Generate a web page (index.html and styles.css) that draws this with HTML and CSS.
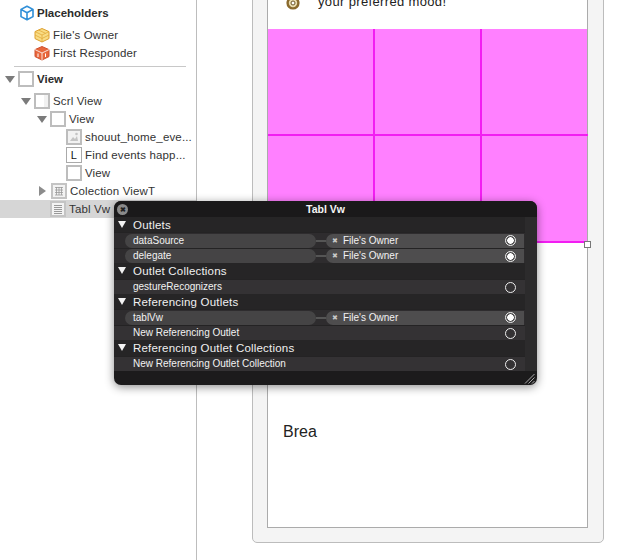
FILE: index.html
```html
<!DOCTYPE html>
<html lang="en">
<head>
<meta charset="utf-8">
<title>Tabl Vw connections</title>
<link rel="stylesheet" href="styles.css">
</head>
<body>
<div class="page">
  <aside class="outline">
    <div class="row row-head indent-0">
      <svg class="ico-cube" viewBox="0 0 16 16"><path d="M8 1.2 14 4.4V11.6L8 14.8 2 11.6V4.4Z M2 4.4 8 7.8 14 4.4 M8 7.8V14.8" fill="none" stroke="#2f8fd8" stroke-width="1.6" stroke-linejoin="round"/></svg>
      <b>Placeholders</b>
    </div>
    <div class="row row-ph first-ph">
      <svg class="ico-cube" viewBox="0 0 16 16"><path d="M8 1.5 15 4.6V11.6L8 15 1 11.6V4.6Z" fill="#f8dc85" stroke="#dd9f2c"/><path d="M1 4.6 8 8 15 4.6 M8 8V15 M4.5 3 11.5 6.3 M1 8 8 11.5 15 8" fill="none" stroke="#e2aa3a" stroke-width=".8"/></svg>
      <span>File's Owner</span>
    </div>
    <div class="row row-ph">
      <svg class="ico-cube" viewBox="0 0 16 16"><path d="M8 1.5 15 4.6V11.6L8 15 1 11.6V4.6Z" fill="#e8673c" stroke="#cf5230"/><path d="M1 4.6 8 8 15 4.6 M8 8V15" fill="none" stroke="#fff" stroke-width=".8"/><path d="M4 8.5V12 M11.5 8.5V12" stroke="#fff" fill="none"/></svg>
      <span>First Responder</span>
    </div>
    <hr class="divider">
    <div class="row row-view">
      <i class="tri down"></i><span class="box box-lg"></span><b>View</b>
    </div>
    <div class="row row-tall level-1">
      <i class="tri down"></i><span class="box box-scroll"></span><span>Scrl View</span>
    </div>
    <div class="row level-2">
      <i class="tri down"></i><span class="box"></span><span>View</span>
    </div>
    <div class="row level-3">
      <span class="box box-img">
        <svg viewBox="0 0 12 12"><path d="M2 10 5 6 7 8 9 5 10 10Z" fill="#c4c4c4"/><circle cx="8.5" cy="3" r="1.3" fill="#c4c4c4"/></svg>
      </span><span>shouut_home_eve...</span>
    </div>
    <div class="row level-3">
      <span class="box box-label">L</span><span>Find events happ...</span>
    </div>
    <div class="row level-3">
      <span class="box"></span><span>View</span>
    </div>
    <div class="row level-2">
      <i class="tri right"></i><span class="box box-grid">
        <svg viewBox="0 0 12 12"><path d="M2 2.5H10 M2 5H10 M2 7.5H10 M2 10H10 M3.5 2V10 M6 2V10 M8.5 2V10" stroke="#999" stroke-width=".8" fill="none"/></svg>
      </span><span>Colection ViewT</span>
    </div>
    <div class="row level-2 selected">
      <i class="tri none"></i><span class="box box-table">
        <svg viewBox="0 0 12 12"><path d="M2 2.5H10 M2 4.5H10 M2 6.5H10 M2 8.5H10 M2 10.5H10" stroke="#999" fill="none"/></svg>
      </span><span>Tabl Vw</span>
    </div>
  </aside>

  <main class="canvas">
    <div class="frame">
      <div class="screen">
        <div class="intro">
          <svg class="mood" viewBox="0 0 14 14"><circle cx="7" cy="7" r="5.4" fill="#e9dcae" stroke="#8a6a2d" stroke-width="2.4"/><circle cx="7" cy="7" r="2" fill="#fff" stroke="#6d5525"/></svg>
          <span>your preferred mood!</span>
        </div>
        <div class="pink">
          <div class="cell"></div><div class="cell"></div><div class="cell"></div>
          <div class="cell"></div><div class="cell"></div><div class="cell"></div>
          <span class="handle"></span>
        </div>
        <div class="label-brea">Brea</div>
      </div>
    </div>
  </main>

  <section class="panel">
    <header class="panel-title">
      <span class="close">✖</span>
      <span>Tabl Vw</span>
    </header>
    <div class="panel-body">
      <div class="p-head"><i class="p-tri"></i>Outlets</div>
      <div class="p-row linked"><span class="pill pill-l">dataSource</span><span class="wire"></span><span class="pill pill-r"><em>✖</em>File's Owner</span><span class="dot on"></span></div>
      <div class="p-row linked"><span class="pill pill-l">delegate</span><span class="wire"></span><span class="pill pill-r"><em>✖</em>File's Owner</span><span class="dot on"></span></div>
      <div class="p-head"><i class="p-tri"></i>Outlet Collections</div>
      <div class="p-row"><span class="plain">gestureRecognizers</span><span class="dot"></span></div>
      <div class="p-head"><i class="p-tri"></i>Referencing Outlets</div>
      <div class="p-row linked"><span class="pill pill-l">tablVw</span><span class="wire"></span><span class="pill pill-r"><em>✖</em>File's Owner</span><span class="dot on"></span></div>
      <div class="p-row"><span class="plain">New Referencing Outlet</span><span class="dot"></span></div>
      <div class="p-head"><i class="p-tri"></i>Referencing Outlet Collections</div>
      <div class="p-row"><span class="plain">New Referencing Outlet Collection</span><span class="dot"></span></div>
    </div>
    <footer class="panel-foot">
      <svg class="grip" viewBox="0 0 11 11"><path d="M10.5 1 1 10.5 M10.5 4.5 4.5 10.5 M10.5 8 8 10.5" stroke="#aaa" fill="none"/></svg>
    </footer>
  </section>
</div>
</body>
</html>
```

FILE: styles.css
```css
* { box-sizing: border-box; }
html, body { margin: 0; padding: 0; background: #fff; }
body { font-family: "Liberation Sans", Arial, sans-serif; color: #333; }

.page {
  position: relative;
  display: flex;
  width: 635px;
  height: 560px;
  overflow: hidden;
}

/* outline */
.outline {
  flex: 0 0 197px;
  height: 560px;
  padding-top: 4px;
  border-right: 1px solid #bdbdbd;
  font-size: 11.5px;
  letter-spacing: .15px;
}
.row {
  display: flex;
  align-items: center;
  height: 18px;
  white-space: nowrap;
}
.row b { font-size: 11.5px; letter-spacing: 0; color: #2c2c2c; }
.row-head { padding-left: 19px; gap: 2px; }
.row-ph { padding-left: 34px; gap: 3px; }
.first-ph { margin-top: 4px; }
.ico-cube { width: 16px; height: 16px; flex: none; }
.divider {
  height: 1px;
  margin: 4px 10px 3px 14px;
  border: 0;
  background: #c8c8c8;
}
.row-view { padding-left: 5px; }
.row-view .box { margin-right: 3px; }
.row-tall { margin-top: 4px; }
.level-1 { padding-left: 21px; }
.level-2 { padding-left: 37px; }
.level-3 { padding-left: 66px; }
.tri { flex: none; display: block; width: 0; height: 0; margin-right: 3px; }
.tri.down { width: 10px; border-left: 5px solid transparent; border-right: 5px solid transparent; border-top: 7px solid #7b7b7b; margin-right: 3px; }
.tri.right { margin-left: 2px; margin-right: 5px; border-top: 5px solid transparent; border-bottom: 5px solid transparent; border-left: 7px solid #8c8c8c; }
.tri.none { width: 10px; }
.box {
  display: flex;
  flex: none;
  align-items: center;
  justify-content: center;
  width: 16px;
  height: 16px;
  margin-right: 3px;
  border: 2px solid #bdbdbd;
  background: #fff;
}
.box svg { width: 12px; height: 12px; }
.box-lg { width: 16px; height: 16px; }
.box-scroll { box-shadow: inset -4px 0 0 #f1f1f1; }
.box-img { background: #f2f2f2; }
.box-label {
  border: 1px solid #aaa;
  color: #111;
  font-size: 11px;
}
.box-grid, .box-table { border-color: #c4c4c4; background: #f3f3f3; }
.selected { background: #d6d6d6; }

/* canvas */
.canvas { flex: 1; min-width: 0; height: 560px; padding-left: 55px; }
.frame {
  width: 352px;
  height: 563px;
  margin-top: -20px;
  padding: 0 15px 15px 14px;
  border: 1px solid #bcbcbc;
  border-radius: 5px;
  background: #f4f4f4;
}
.screen {
  height: 547px;
  border: 1px solid #ababab;
  border-top: 0;
  background: #fff;
}
.intro {
  display: flex;
  align-items: flex-end;
  height: 48px;
  padding: 0 0 19px 18px;
  color: #222;
  font-size: 13px;
  letter-spacing: .35px;
}
.mood { width: 14px; height: 14px; margin-right: 18px; }
.intro span { line-height: 16px; }
.pink {
  position: relative;
  display: grid;
  grid-template-columns: 107px 107px 106px;
  grid-template-rows: 107px 107px;
  height: 214px;
  background: #ff80ff;
}
.cell { border-right: 2px solid #f21df2; border-bottom: 2px solid #f21df2; }
.cell:nth-child(3n) { border-right: 0; }
.handle {
  position: absolute;
  right: -4px;
  bottom: -5px;
  width: 7px;
  height: 7px;
  border: 1px solid #777;
  background: #fff;
}
.label-brea {
  margin: 179px 0 0 15px;
  color: #222;
  font-size: 16px;
  line-height: 20px;
}

/* connections panel */
.panel {
  position: absolute;
  left: 114px;
  top: 201px;
  width: 423px;
  height: 184px;
  overflow: hidden;
  border-radius: 7px;
  background: #1c1b1c;
  box-shadow: 0 2px 10px rgba(0,0,0,.45);
  color: #f2f2f2;
  font-size: 10px;
}
.panel-title {
  position: relative;
  display: flex;
  align-items: center;
  justify-content: center;
  height: 16px;
  background: #1a191a;
  color: #f5f5f5;
  font-size: 10.5px;
  font-weight: bold;
}
.close {
  position: absolute;
  left: 3px;
  top: 3px;
  width: 11px;
  height: 11px;
  border-radius: 50%;
  background: #8a8a8a;
  color: #222;
  font-size: 7px;
  line-height: 11px;
  text-align: center;
}
.panel-body { height: 154px; padding-right: 12px; background: #2c2b2c; }
.p-head {
  display: flex;
  align-items: center;
  height: 15.4px;
  padding-left: 4px;
  background: #262526;
  color: #f0f0f0;
  font-size: 11.5px;
  font-weight: normal;
  letter-spacing: .2px;
}
.p-tri {
  width: 0;
  height: 0;
  margin-right: 7px;
  border-left: 4px solid transparent;
  border-right: 4px solid transparent;
  border-top: 7px solid #f2f2f2;
}
.p-row {
  position: relative;
  display: flex;
  align-items: center;
  height: 15.4px;
  padding: 0 1px 0 11px;
  background: #343234;
  border-top: 1px solid #242324;
}
.linked { background: #2e2c2e; }
.pill {
  display: flex;
  align-items: center;
  height: 14px;
  border-radius: 7px;
  background: #4a494a;
}
.pill-l { width: 191px; padding-left: 8px; background: #454445; }
.wire { width: 10px; height: 2px; background: #555; }
.pill-r { flex: 1; padding-left: 6px; background: #4e4d4e; border-radius: 7px 0 0 7px; }
.pill-r em { margin-right: 5px; color: #c8c8c8; font-size: 7px; font-style: normal; }
.plain { flex: 1; padding-left: 8px; }
.dot {
  position: absolute;
  right: 9px;
  top: 2px;
  width: 11px;
  height: 11px;
  border: 1px solid #eee;
  border-radius: 50%;
}
.dot.on { background: radial-gradient(circle, #fff 0 3px, #4e4d4e 3.5px); }
.panel-foot { position: relative; height: 14px; }
.grip { position: absolute; right: 2px; bottom: 1px; width: 11px; height: 11px; }
```
